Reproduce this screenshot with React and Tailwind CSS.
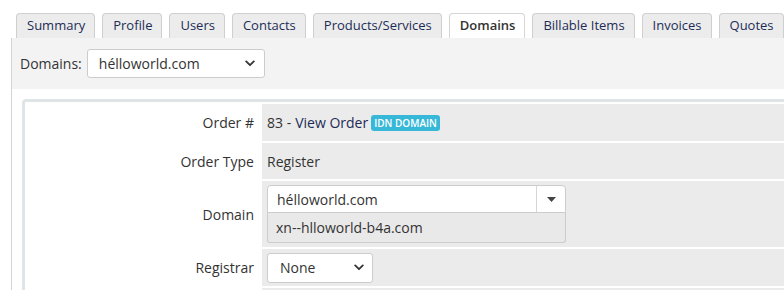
import React from 'react';

const tabs = ['Summary', 'Profile', 'Users', 'Contacts', 'Products/Services', 'Domains', 'Billable Items', 'Invoices', 'Quotes'];

const Chevron = ({ className = '' }) => (
  <svg width="10" height="7" viewBox="0 0 10 7" className={className}>
    <path d="M1.2 1.4 L5 5.2 L8.8 1.4" fill="none" stroke="#333" strokeWidth="1.8" strokeLinecap="round" strokeLinejoin="round" />
  </svg>
);

const Tab = ({ label, active }) => (
  <div
    className={`h-[25px] pl-[10px] pr-[9px] flex items-center rounded-t-[4px] border border-b-0 text-[13px] whitespace-nowrap
      ${active ? 'bg-white border-[#d6d6d6] text-[#333] font-semibold' : 'bg-[#ececec] border-[#cfcfcf] text-[#1c2c57]'}`}
  >
    {label}
  </div>
);

const Row = ({ label, height, children }) => (
  <div className="flex gap-[2px]" style={{ height }}>
    <div className="w-[235px] flex items-center justify-end pr-[6px] text-[#333]">{label}</div>
    <div className="flex-1 bg-[#ebebeb] flex items-center pl-[5px]">{children}</div>
  </div>
);

export default function App() {
  return (
    <div className="w-[784px] h-[290px] overflow-hidden bg-white text-[14px] text-[#333] font-['Open_Sans',sans-serif]">
      <div className="pt-[13px] pl-[16px] flex gap-[7px]">
        {tabs.map((t) => (
          <Tab key={t} label={t} active={t === 'Domains'} />
        ))}
      </div>
      <div className="ml-[11px] border-l border-[#d4d4d4] h-[260px]">
        <div className="h-[51px] bg-[#f3f3f3] flex items-center pl-[8px] gap-[5px]">
          <span>Domains:</span>
          <div className="w-[178px] h-[29px] bg-white border border-[#cccccc] rounded-[3px] flex items-center justify-between pl-[11px] pr-[9px]">
            <span>hélloworld.com</span>
            <Chevron />
          </div>
        </div>
        <div className="pt-[10px] pl-[10px]">
          <div className="border-[3px] border-r-0 border-[#dfe4e7] rounded-l-[4px] pt-[2px] flex flex-col gap-[2px]">
            <Row label="Order #" height={37}>
              <span>83 - </span>
              <span className="text-[#1c2c57] ml-[4px]">View Order</span>
              <span className="ml-[3px] h-[16px] px-[3px] rounded-[3px] bg-[#38b8d8] text-white text-[10px] font-semibold flex items-center leading-none">IDN DOMAIN</span>
            </Row>
            <Row label="Order Type" height={36}>
              <span>Register</span>
            </Row>
            <Row label="Domain" height={66}>
              <div className="w-[299px] flex flex-col">
                <div className="h-[28px] bg-white border border-[#cccccc] rounded-t-[4px] flex">
                  <div className="flex-1 flex items-center pl-[9px]">hélloworld.com</div>
                  <div className="w-[29px] border-l border-[#d6d6d6] flex items-center justify-center">
                    <svg width="9" height="5" viewBox="0 0 9 5">
                      <path d="M0 0 H9 L4.5 5 Z" fill="#444" />
                    </svg>
                  </div>
                </div>
                <div className="h-[30px] bg-[#e9e9e9] border border-t-0 border-[#cccccc] rounded-b-[3px] flex items-center pl-[8px]">
                  xn--hlloworld-b4a.com
                </div>
              </div>
            </Row>
            <Row label="Registrar" height={37}>
              <div className="w-[106px] h-[30px] bg-white border border-[#cccccc] rounded-[3px] flex items-center justify-between pl-[12px] pr-[8px]">
                <span>None</span>
                <Chevron />
              </div>
            </Row>
            <Row label="" height={36}>
              <span></span>
            </Row>
          </div>
        </div>
      </div>
    </div>
  );
}
